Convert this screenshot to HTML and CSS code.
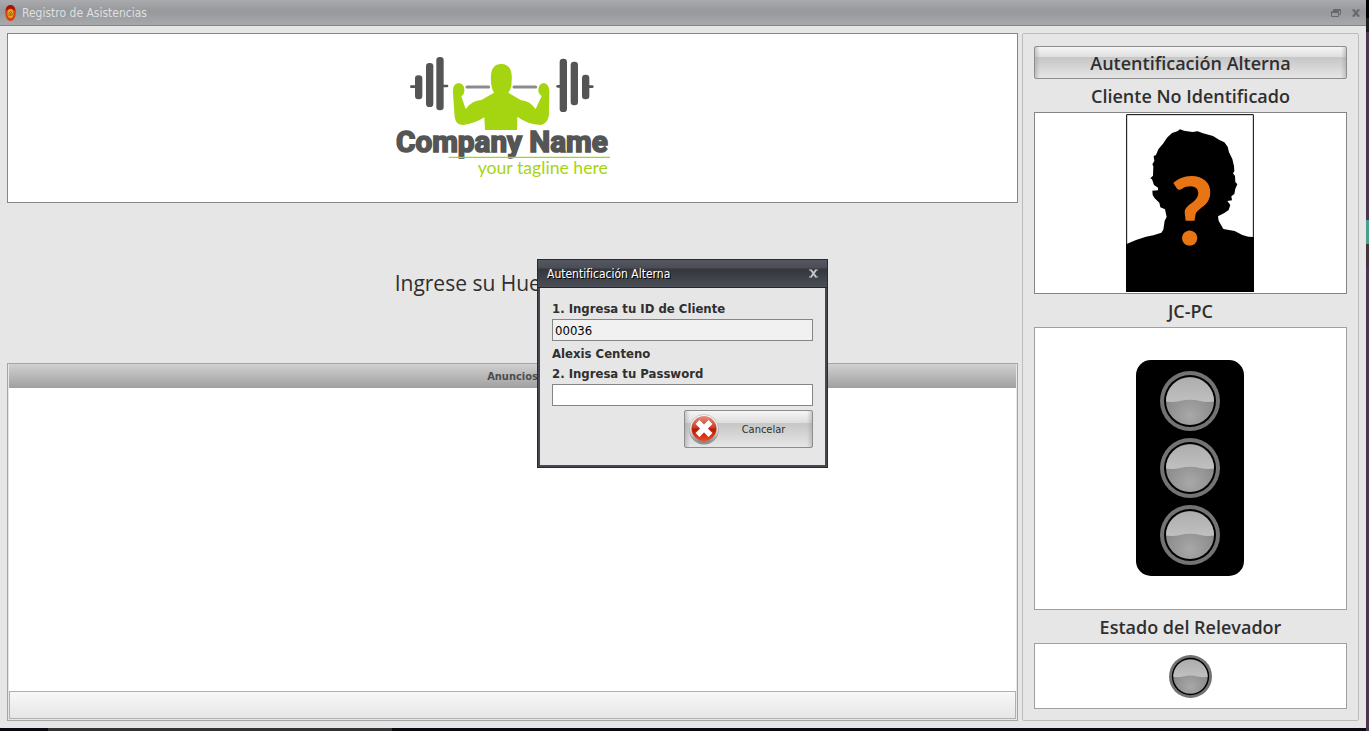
FILE: index.html
```html
<!DOCTYPE html>
<html lang="es">
<head>
<meta charset="utf-8">
<title>Registro de Asistencias</title>
<link rel="stylesheet" href="styles.css">
</head>
<body>
<svg class="defs" width="0" height="0" aria-hidden="true">
  <defs>
    <linearGradient id="top" x1="0" y1="0" x2="0" y2="1"><stop offset="0" stop-color="#adadad"/><stop offset="1" stop-color="#c0c0c0"/></linearGradient>
    <radialGradient id="low" cx=".5" cy=".8" r=".7"><stop offset="0" stop-color="#a8a8a8"/><stop offset="1" stop-color="#828282"/></radialGradient>
    <symbol id="lamp" viewBox="0 0 60 60">
      <circle cx="30" cy="30" r="30" fill="#737373"/>
      <circle cx="30" cy="30" r="26" fill="#000"/>
      <circle cx="30" cy="30" r="24" fill="url(#low)"/>
      <path d="M6 30.500a24 24 0 0 1 48 0Q47 31.500 40 30Q30 27.500 20 30Q13 31.500 6 30.500z" fill="url(#top)"/>
    </symbol>
  </defs>
</svg>
<div class="window">
  <header class="titlebar">
    <svg class="app-icon" viewBox="0 0 11 16" aria-hidden="true">
      <ellipse cx="5.500" cy="8" rx="5.300" ry="8" fill="#d9401a"/>
      <path d="M.5 6Q1 0 5.500 0T10.500 6Q5.500 1 .5 6z" fill="#a81208"/>
      <ellipse cx="5.500" cy="8.500" rx="3" ry="4.500" fill="#e9a51b"/>
      <path d="M4 11V8q1.500-3 3 0v3M5.500 8v3" fill="none" stroke="#8a5a10" stroke-width=".8"/>
    </svg>
    <h1 class="window-title">Registro de Asistencias</h1>
    <button class="window-button" aria-label="Restaurar">
      <svg width="10" height="8" viewBox="0 0 10 8"><path d="M2.500 2V.5h7v5H8M2.500 1.500h7M.5 2.500h7v5h-7zM.5 3.500h7" fill="none" stroke="#66686b"/></svg>
    </button>
    <button class="window-button" aria-label="Cerrar">
      <svg width="8" height="8" viewBox="0 0 8 8"><path d="M1.500 1l5 6M6.500 1l-5 6" fill="none" stroke="#66686b" stroke-width="2"/><path d="M0 1h3M5 1h3M0 7h3M5 7h3" stroke="#66686b"/></svg>
    </button>
  </header>
  <main class="content">
    <section class="main-column">
      <div class="logo-box">
        <svg class="logo" viewBox="0 0 792 468" role="img" aria-label="Company Name">
          <g fill="#555">
            <rect x="87" y="136" width="28" height="8" rx="4"/><rect x="180" y="134" width="22" height="8" rx="4"/>
            <rect x="102" y="106" width="22" height="72" rx="10"/><rect x="135" y="69" width="22" height="132" rx="10"/><rect x="166" y="51" width="22" height="160" rx="10"/>
            <rect x="526" y="135" width="20" height="8" rx="4"/><rect x="618" y="136" width="20" height="8" rx="4"/>
            <rect x="536" y="56" width="22" height="160" rx="10"/><rect x="569" y="65" width="22" height="131" rx="10"/><rect x="603" y="104" width="22" height="74" rx="10"/>
          </g>
          <path d="M258 141h65M399 141h65" stroke="#8b8b8b" stroke-width="9" stroke-linecap="round"/>
          <path d="M312 270L310 232Q284 250 247 255Q225 256 221 231L216 160Q214 130 233 129Q250 132 250 148Q251 164 241 169L254 207Q273 181 301 180L339 158Q330 144 330 123Q326 72 361 72Q396 72 392 123Q392 146 382 158L419 180Q448 183 464 207L482 168Q471 161 472 146Q474 131 489 129Q506 132 505 160L504 224Q501 250 479 255Q440 253 409 230L408 270z" fill="#a5d510"/>
          <text class="logo-name" x="45" y="335">Company Name</text>
          <path d="M203 352h484" stroke="#a5d510" stroke-width="4"/>
          <text class="logo-tagline" x="290" y="403">your tagline here</text>
        </svg>
      </div>
      <p class="prompt">Ingrese su Huella Digital</p>
      <section class="notices">
        <h2 class="notices-title">Anuncios</h2>
        <div class="notices-list"></div>
        <div class="notices-footer"></div>
      </section>
    </section>
    <aside class="side-panel">
      <button class="glossy alternate">Autentificación Alterna</button>
      <h2 class="side-label">Cliente No Identificado</h2>
      <div class="frame photo-frame">
        <svg class="photo" viewBox="48 27 384 534" role="img" aria-label="Cliente sin fotografía">
          <path d="M50 29h380v530H50z" fill="#fff" stroke="#000" stroke-width="3"/>
          <path d="M48 418L78 405L108 395L130 391L154 383L160 374L164 347L170 336L165 313L151 307L148 293L134 280L128 270L127 257L144 256L144 248L132 240L126 223L121 220L129 212L130 184L127 178L133 168L131 153L138 150L145 133L159 116L171 98L186 84L202 79L210 73L222 77L247 81L263 79L279 85L309 93L327 104L343 112L353 125L357 142L367 162L372 183L373 199L369 205L375 213L376 231L382 238L376 251L373 267L364 274L366 286L352 288L361 300L356 315L343 324L324 334L326 347L340 372L374 378L397 390L415 395L432 396V561H48z" fill="#000"/>
          <text class="question" x="246" y="419">?</text>
        </svg>
      </div>
      <h2 class="side-label">JC-PC</h2>
      <div class="frame signal-frame">
        <div class="signal">
          <svg class="lamp"><use href="#lamp"/></svg>
          <svg class="lamp"><use href="#lamp"/></svg>
          <svg class="lamp"><use href="#lamp"/></svg>
        </div>
      </div>
      <h2 class="side-label">Estado del Relevador</h2>
      <div class="frame relay-frame">
        <svg class="lamp lamp-small"><use href="#lamp"/></svg>
      </div>
    </aside>
  </main>
  <form class="dialog" role="dialog" aria-labelledby="dialog-title">
    <header class="dialog-bar">
      <h2 class="dialog-title" id="dialog-title">Autentificación Alterna</h2>
      <button type="button" class="dialog-close" aria-label="Cerrar">
        <svg width="9" height="9" viewBox="0 0 9 9"><path d="M2 1l5 7M7 1L2 8" fill="none" stroke="#c3c6cb" stroke-width="2"/><path d="M0 1h3M6 1h3M0 8h3M6 8h3" stroke="#c3c6cb"/></svg>
      </button>
    </header>
    <div class="dialog-body">
      <label class="field-label" for="client">1. Ingresa tu ID de Cliente</label>
      <input class="field field-filled" id="client" type="text" value="00036">
      <output class="field-label client-name" for="client">Alexis Centeno</output>
      <label class="field-label" for="password">2. Ingresa tu Password</label>
      <input class="field" id="password" type="password">
      <button type="button" class="glossy cancel">
        <svg class="cancel-icon" viewBox="0 0 30 31" aria-hidden="true">
          <defs>
            <linearGradient id="rim" x1="0" y1="0" x2="0" y2="1"><stop offset="0" stop-color="#fff"/><stop offset=".6" stop-color="#ddd"/><stop offset="1" stop-color="#777"/></linearGradient>
            <linearGradient id="red" x1="0" y1="0" x2="0" y2="1"><stop offset="0" stop-color="#e59080"/><stop offset=".48" stop-color="#c93a22"/><stop offset=".52" stop-color="#b81804"/><stop offset="1" stop-color="#f04a20"/></linearGradient>
          </defs>
          <circle cx="15" cy="16" r="14.500" fill="#888"/>
          <circle cx="15" cy="15" r="14.500" fill="url(#rim)" stroke="#aaa" stroke-width=".6"/>
          <circle cx="15" cy="14.500" r="12.500" fill="url(#red)"/>
          <path d="M8.500 8l13 13M21.500 8l-13 13" stroke="#fff" stroke-width="5.500"/>
        </svg>
        <span class="cancel-text">Cancelar</span>
      </button>
    </div>
  </form>
</div>
</body>
</html>
```

FILE: styles.css
```css
* { box-sizing: border-box; }

body {
  margin: 0;
  min-height: 100vh;
  display: flex;
  padding: 0 3px 3px 0;
  background:
    linear-gradient(#000 18px, #1e1c20 18px 32px, #4b3650 32px 220px, #4b9c88 220px 244px, #44353d 244px 268px, #4b3650 268px) right top / 3px 100% no-repeat,
    linear-gradient(90deg, #0a0810 48px, #333 48px 392px, #0a0810 392px);
  font-family: "DejaVu Sans Condensed", "DejaVu Sans", sans-serif;
  font-stretch: condensed;
  color: #2f2f2f;
}

h1, h2, p { margin: 0; }
button, input { font-family: inherit; font-stretch: inherit; color: inherit; margin: 0; }
svg { display: block; flex: none; }
.defs { position: absolute; }

.window {
  position: relative;
  flex: 1;
  display: flex;
  flex-direction: column;
  background: #e6e6e6;
}

.titlebar {
  display: flex;
  align-items: center;
  gap: 6px;
  height: 26px;
  padding: 0 3px 0 5px;
  border-bottom: 1px solid #85868a;
  background: linear-gradient(#aaabaf, #9b9c9e 35%, #98999b 50%, #a8a9ad);
}
.app-icon { width: 11px; height: 16px; }
.window-title { flex: 1; font-size: 12px; font-weight: 400; color: #dfe0e2; }
.window-button { width: 14px; height: 14px; padding: 0; border: 0; background: none; display: grid; place-items: center; }

.content {
  flex: 1;
  display: flex;
  gap: 4px;
  padding: 7px;
}

.main-column { flex: 1; display: flex; flex-direction: column; }
.logo-box {
  height: 170px;
  display: grid;
  place-items: center;
  background: #fff;
  border: 1px solid #858585;
}
.logo { width: 264px; height: 156px; }
.logo-name { font: 700 89px Roboto, sans-serif; fill: #555; stroke: #555; stroke-width: 5px; }
.logo-tagline { font: 400 53px Lato, sans-serif; fill: #a5d510; }

.prompt {
  height: 160px;
  display: grid;
  place-items: center;
  font: 21px/28px "Open Sans", sans-serif;
}

.notices {
  flex: 1;
  display: flex;
  flex-direction: column;
  padding: 0 1px 1px;
  border: 1px solid #a5a5a5;
  background: #e6e6e6;
}
.notices-title {
  padding: 6px 0 4px;
  font-size: 11px;
  line-height: 14px;
  text-align: center;
  color: #4d4d4d;
  background: linear-gradient(#d0d0d0, #a0a0a0);
}
.notices-list { flex: 1; background: #fff; }
.notices-footer { height: 28px; border: 1px solid #b0b0b0; background: linear-gradient(#f8f8f8, #e6e6e6); }

.side-panel {
  width: 337px;
  display: flex;
  flex-direction: column;
  padding: 12px 11px 11px;
  border: 1px solid #bcbcbc;
  border-radius: 2px;
}

.glossy {
  border: 1px solid #8d8d8d;
  border-radius: 2px;
  background:
    linear-gradient(90deg, #9997, transparent 5px calc(100% - 5px), #9997),
    linear-gradient(#f6f6f6, #dedede 32%, #c6c6c6 34%, #e6e6e6);
}
.alternate, .side-label { font: 700 18px/24px "Open Sans", sans-serif; }
.alternate, .side-label { font-weight: 600; }
.alternate { height: 33px; padding: 0; }
.side-label { height: 33px; padding-top: 5px; text-align: center; }

.frame { display: grid; place-items: center; background: #fff; border: 1px solid #a0a0a0; }
.photo-frame { height: 182px; padding-right: 1px; border-color: #858585; }
.photo { width: 128px; height: 178px; }
.question { font: 900 280px Lato, sans-serif; fill: #e87414; text-anchor: middle; }
.signal-frame { flex: 1; padding: 0 1px 1px 0; }
.signal {
  display: flex;
  flex-direction: column;
  align-items: center;
  gap: 7px;
  width: 108px;
  padding: 11px 0;
  border-radius: 15px;
  background: #000;
}
.lamp { width: 60px; height: 60px; }
.relay-frame { height: 66px; }
.lamp-small { width: 43px; height: 43px; }

.dialog {
  position: absolute;
  inset: 0 1px 1px 0;
  margin: auto;
  width: 291px;
  height: fit-content;
  border: 1px solid #292b30;
  background: #45484f;
}
.dialog-bar {
  display: flex;
  align-items: center;
  height: 28px;
  padding: 0 9px;
  border-bottom: 1px solid #24262a;
  background: linear-gradient(#555861, #4a4d55 30%, #34363c 33%, #4b4e56);
}
.dialog-title { flex: 1; font-size: 12px; font-weight: 400; color: #fff; text-shadow: 1px 1px #000; }
.dialog-close { padding: 0; border: 0; background: none; }
.dialog-body {
  display: flex;
  flex-direction: column;
  margin: 0 2px 2px;
  padding: 11px 12px 17px;
  background: #e6e6e6;
}
.field-label { font-size: 13px; font-weight: 700; line-height: 20px; }
.client-name { padding-top: 3px; }
.field {
  width: 100%;
  height: 22px;
  padding: 0 2px;
  border: 1px solid #858585;
  border-radius: 0;
  background: #fff;
  color: #000;
  font-size: 13px;
}
.field-filled { background: #f1f1f1; }
.cancel {
  display: flex;
  align-items: center;
  align-self: flex-end;
  width: 129px;
  height: 38px;
  margin-top: 4px;
  padding: 0 4px;
}
.cancel-icon { width: 30px; height: 31px; }
.cancel-text { flex: 1; font-size: 11px; text-align: center; }
```
